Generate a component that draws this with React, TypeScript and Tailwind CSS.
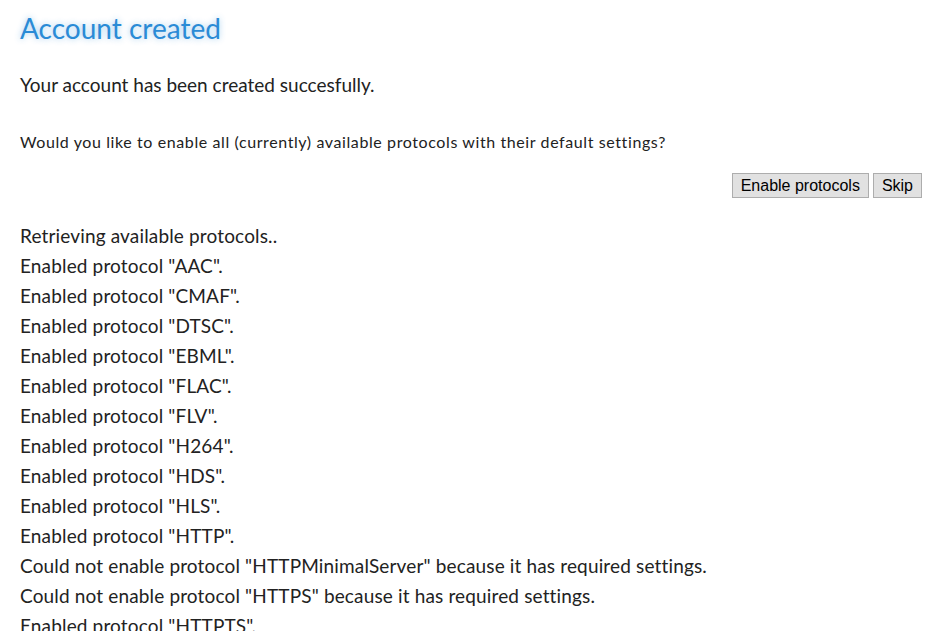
import React from "react";

const lines = [
  "Retrieving available protocols..",
  'Enabled protocol "AAC".',
  'Enabled protocol "CMAF".',
  'Enabled protocol "DTSC".',
  'Enabled protocol "EBML".',
  'Enabled protocol "FLAC".',
  'Enabled protocol "FLV".',
  'Enabled protocol "H264".',
  'Enabled protocol "HDS".',
  'Enabled protocol "HLS".',
  'Enabled protocol "HTTP".',
  'Could not enable protocol "HTTPMinimalServer" because it has required settings.',
  'Could not enable protocol "HTTPS" because it has required settings.',
  'Enabled protocol "HTTPTS".',
  'Enabled protocol "JSON".',
];

export default function App() {
  return (
    <div className="h-[631px] overflow-hidden bg-white px-5 font-['Lato',sans-serif] text-[#222]">
      <h1 className="pt-[10px] text-[28px] leading-[36px] text-[#2a8bd6] [text-shadow:0_0_6px_rgba(42,139,214,0.45)]">
        Account created
      </h1>
      <p className="mt-[27px] text-[19px] leading-[24px]">Your account has been created succesfully.</p>
      <p className="mt-[35px] text-[16px] leading-[20px] tracking-[0.6px]">
        Would you like to enable all (currently) available protocols with their default settings?
      </p>
      <div className="-mr-[12px] mt-[21px] flex justify-end gap-[4px] font-['Liberation_Sans',Arial,sans-serif] text-[16px]">
        <button className="h-[25px] border border-[#adadad] bg-[#e1e1e1] px-[8px] leading-[23px] text-black">
          Enable protocols
        </button>
        <button className="h-[25px] border border-[#adadad] bg-[#e1e1e1] px-[8px] leading-[23px] text-black">
          Skip
        </button>
      </div>
      <div className="mt-[23px] flex flex-col text-[19px] leading-[30px] tracking-[0.15px]">
        {lines.map((l) => (
          <div key={l}>{l}</div>
        ))}
      </div>
    </div>
  );
}
